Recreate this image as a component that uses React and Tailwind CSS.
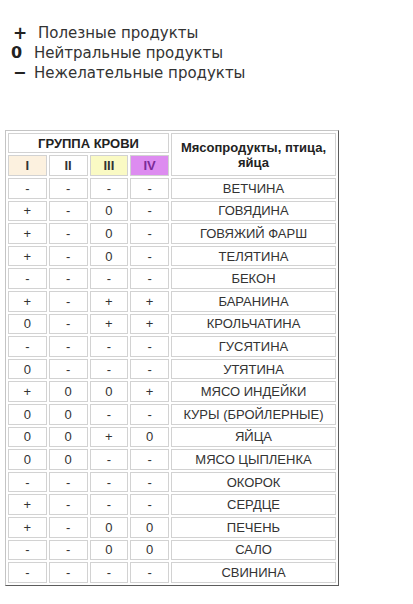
const rows = [
  ['-', '-', '-', '-', 'ВЕТЧИНА'],
  ['+', '-', '0', '-', 'ГОВЯДИНА'],
  ['+', '-', '0', '-', 'ГОВЯЖИЙ ФАРШ'],
  ['+', '-', '0', '-', 'ТЕЛЯТИНА'],
  ['-', '-', '-', '-', 'БЕКОН'],
  ['+', '-', '+', '+', 'БАРАНИНА'],
  ['0', '-', '+', '+', 'КРОЛЬЧАТИНА'],
  ['-', '-', '-', '-', 'ГУСЯТИНА'],
  ['0', '-', '-', '-', 'УТЯТИНА'],
  ['+', '0', '0', '+', 'МЯСО ИНДЕЙКИ'],
  ['0', '0', '-', '-', 'КУРЫ (БРОЙЛЕРНЫЕ)'],
  ['0', '0', '+', '0', 'ЯЙЦА'],
  ['0', '0', '-', '-', 'МЯСО ЦЫПЛЕНКА'],
  ['-', '-', '-', '-', 'ОКОРОК'],
  ['+', '-', '-', '-', 'СЕРДЦЕ'],
  ['+', '-', '0', '0', 'ПЕЧЕНЬ'],
  ['-', '-', '0', '0', 'САЛО'],
  ['-', '-', '-', '-', 'СВИНИНА'],
];

const cell = 'border border-[#d2d2d2] p-0 text-center align-middle';

export default function App() {
  return (
    <div className="w-[413px] h-[604px] bg-white text-[#333] overflow-hidden">
      <div className="pt-[23px] font-['DejaVu_Sans',sans-serif] text-[15px] leading-[20px]">
        <div className="flex">
          <span className="ml-[13px] w-[25px] font-bold text-[17px] text-[#222]">+</span>
          <span>Полезные продукты</span>
        </div>
        <div className="flex">
          <span className="ml-[11px] w-[23px] font-bold text-[16px] text-[#222]">0</span>
          <span>Нейтральные продукты</span>
        </div>
        <div className="flex">
          <span className="ml-[13px] w-[21px] font-bold text-[16px] text-[#222]">−</span>
          <span>Нежелательные продукты</span>
        </div>
      </div>

      <table className="mt-[47px] ml-[5px] w-[334px] table-fixed border-separate border-spacing-[2px] border border-t-[#c4c4c4] border-l-[#c4c4c4] border-r-[#5c5c5c] border-b-[#5c5c5c] font-['Liberation_Sans',Arial,sans-serif] text-[13px] leading-[15px] text-[#333]">
        <thead>
          <tr className="h-[20px]">
            <th colSpan={4} className={cell + ' font-bold text-[#222]'}>ГРУППА КРОВИ</th>
            <th rowSpan={2} className={cell + ' w-[165px] font-bold text-[#222]'}>
              Мясопродукты, птица,<br />яйца
            </th>
          </tr>
          <tr className="h-[21px]">
            <th className={cell + ' w-[38px] bg-[#fcf1df] font-bold text-[#333]'}>I</th>
            <th className={cell + ' w-[39px] bg-white font-bold text-[#333]'}>II</th>
            <th className={cell + ' w-[39px] bg-[#fafac4] font-bold text-[#333]'}>III</th>
            <th className={cell + ' w-[39px] bg-[#dd8cf0] font-bold text-[#7b2a98]'}>IV</th>
          </tr>
        </thead>
        <tbody>
          {rows.map((r) => (
            <tr key={r[4]}>
              <td className={cell + ' h-[20.6px]'}>{r[0]}</td>
              <td className={cell + ' h-[20.6px]'}>{r[1]}</td>
              <td className={cell + ' h-[20.6px]'}>{r[2]}</td>
              <td className={cell + ' h-[20.6px]'}>{r[3]}</td>
              <td className={cell + ' h-[20.6px]'}>{r[4]}</td>
            </tr>
          ))}
        </tbody>
      </table>
    </div>
  );
}
